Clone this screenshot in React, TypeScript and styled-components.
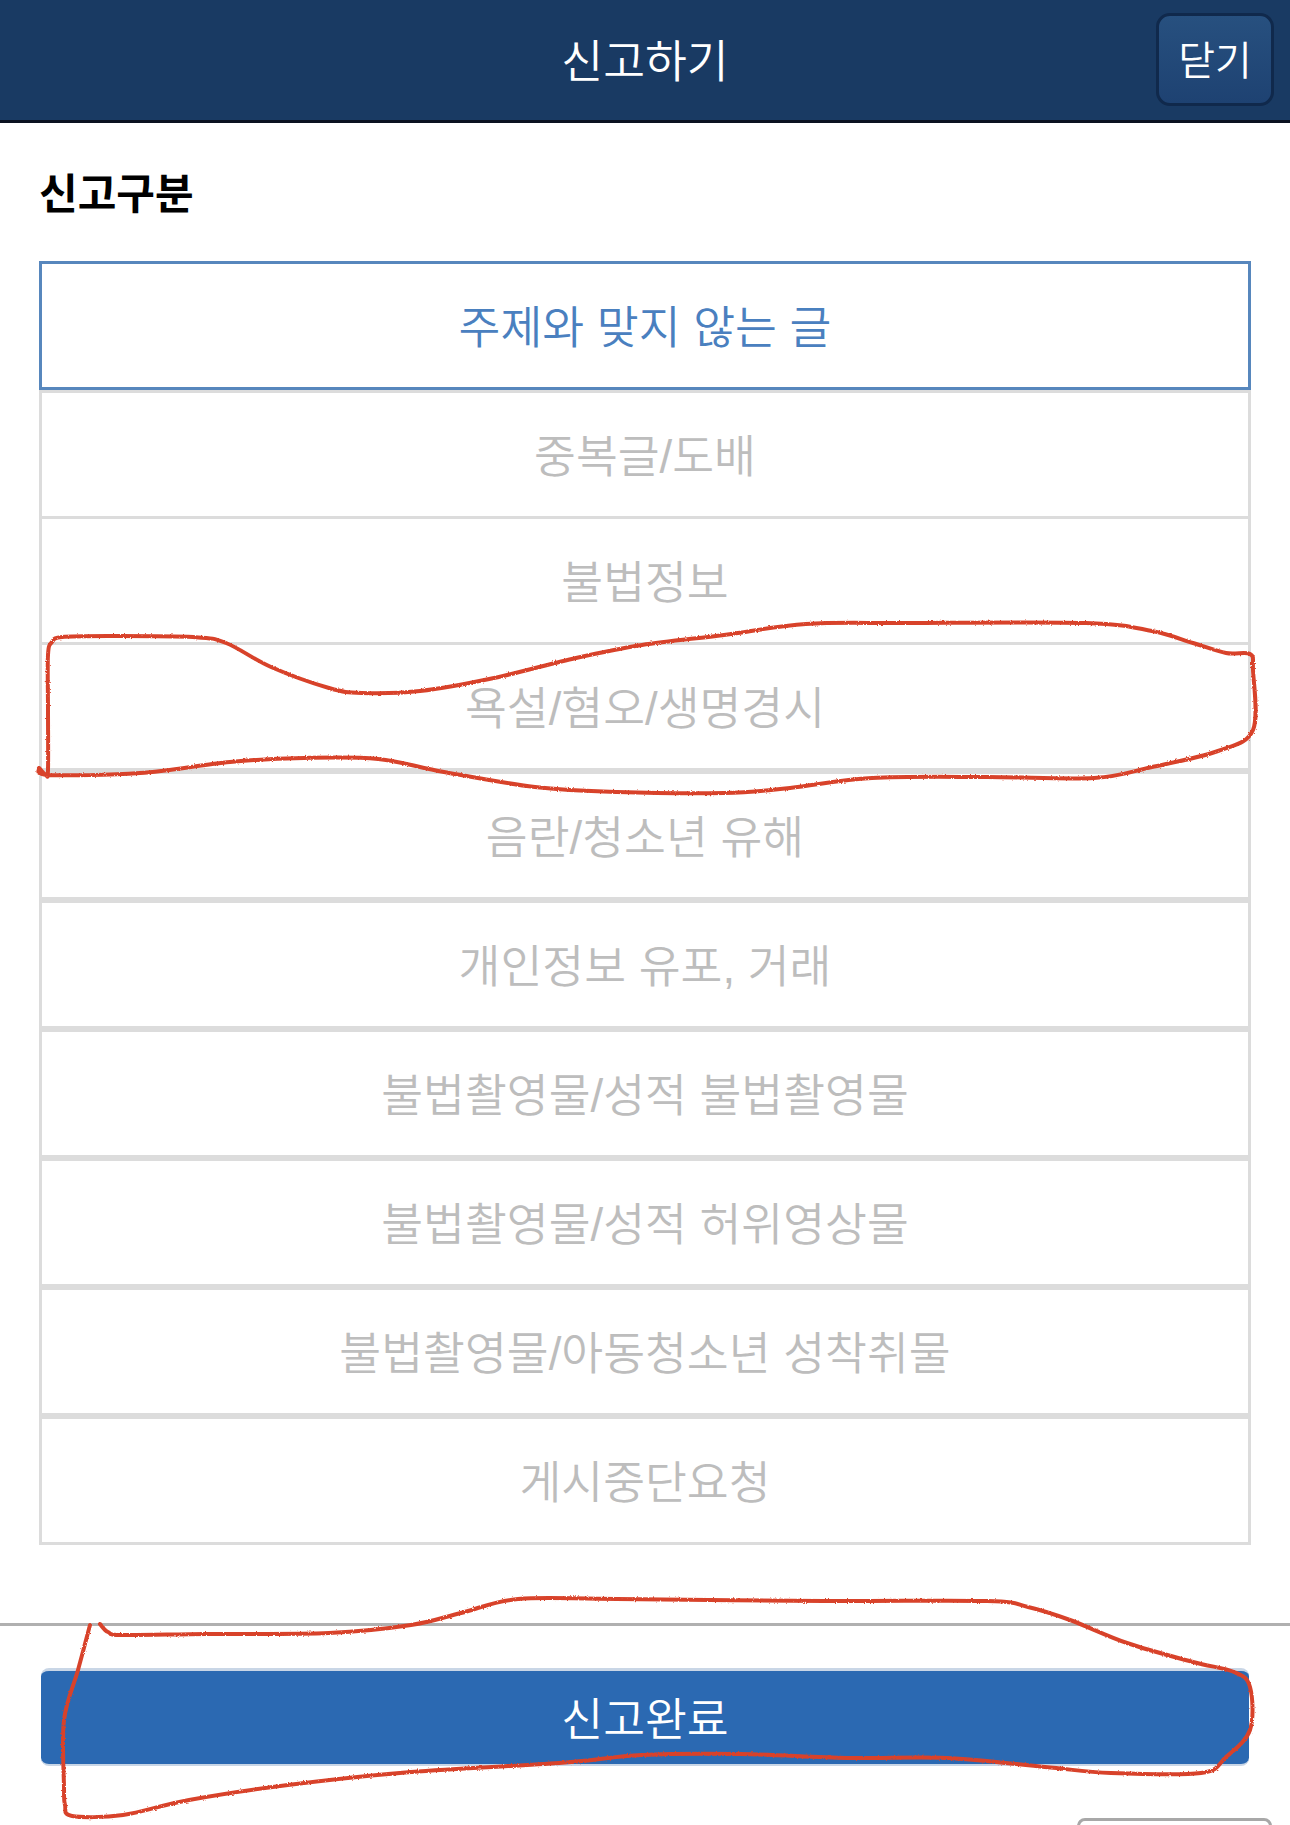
import { createGlobalStyle } from 'styled-components'
import styled from 'styled-components'

const Global = createGlobalStyle`
  html, body {
    margin: 0;
    padding: 0;
    background: #fff;
    font-family: "Liberation Sans", "Noto Sans CJK KR", sans-serif;
  }
`

const Page = styled.div`
  position: relative;
  width: 1290px;
  height: 1825px;
  overflow: hidden;
  background: #fff;
`

const Header = styled.header`
  position: relative;
  display: flex;
  align-items: center;
  justify-content: center;
  box-sizing: border-box;
  height: 123px;
  padding-bottom: 4px;
  background: #193a63;
  border-bottom: 3px solid #0a1220;
`

const Title = styled.h1`
  margin: 0;
  font-size: 45.5px;
  font-weight: 350;
  color: #fff;
`

const CloseButton = styled.button`
  position: absolute;
  top: 13px;
  right: 16px;
  width: 118px;
  height: 93px;
  padding: 0 0 4px;
  border: 3px solid #10294c;
  border-radius: 14px;
  background: linear-gradient(#27507f, #1e4272);
  color: #fff;
  font: inherit;
  font-size: 40px;
  font-weight: 350;
`

const Section = styled.section`
  padding: 0 39px;
`

const SectionTitle = styled.h2`
  margin: 0;
  padding: 44px 0 38px;
  font-size: 42px;
  line-height: 56px;
  font-weight: 700;
  color: #000;
`

const OptionList = styled.div`
  display: flex;
  flex-direction: column;
`

const Option = styled.div<{ $active?: boolean; $merged?: boolean }>`
  display: flex;
  align-items: center;
  justify-content: center;
  box-sizing: border-box;
  height: 129px;
  margin-top: ${p => (p.$merged ? '-3px' : '0')};
  padding-bottom: 3px;
  font-size: 45.5px;
  font-weight: 350;
  color: ${p => (p.$active ? '#4a80bf' : '#bdbdbd')};
  border: 3px solid ${p => (p.$active ? '#5787bd' : '#dcdcdc')};
`

const Footer = styled.footer`
  margin-top: 78px;
  padding: 0 41px;
  border-top: 3px solid #b0b0b0;
`

const SubmitButton = styled.button`
  display: block;
  box-sizing: border-box;
  width: 100%;
  height: 98px;
  margin-top: 42px;
  padding: 0 0 3px;
  border: 0;
  border-top: 3px solid #c9d6e6;
  border-bottom: 2px solid #c9d6e6;
  border-radius: 8px;
  background: #2b69b2;
  color: #fff;
  font: inherit;
  font-size: 45.5px;
  font-weight: 350;
`

const PeekButton = styled.div`
  position: absolute;
  top: 1818px;
  left: 1077px;
  width: 195px;
  height: 20px;
  box-sizing: border-box;
  border: 3px solid #a8a8a8;
  border-radius: 8px 8px 0 0;
`

const Scribble = styled.svg`
  position: absolute;
  top: 0;
  left: 0;
  pointer-events: none;
`

const options = [
  { label: '주제와 맞지 않는 글', active: true },
  { label: '중복글/도배' },
  { label: '불법정보', merged: true },
  { label: '욕설/혐오/생명경시', merged: true },
  { label: '음란/청소년 유해' },
  { label: '개인정보 유포, 거래' },
  { label: '불법촬영물/성적 불법촬영물' },
  { label: '불법촬영물/성적 허위영상물' },
  { label: '불법촬영물/아동청소년 성착취물' },
  { label: '게시중단요청' },
]

// pen marks on the screenshot, page coordinates
const markA: [number, number][] = [
  [39, 768], [46, 775], [48, 770], [48, 710], [48, 655], [52, 642], [62, 637], [107, 636], [193, 637], [226, 643],
  [271, 667], [329, 688], [362, 693], [420, 691], [494, 678], [576, 658], [642, 645], [724, 635],
  [806, 624], [905, 623], [1086, 623], [1152, 631], [1193, 643], [1226, 653], [1250, 654],
  [1253, 670], [1253, 730], [1218, 751], [1152, 767], [1094, 778], [987, 777], [872, 778], [790, 788],
  [724, 793], [617, 792], [535, 787], [444, 772], [378, 759], [304, 758], [230, 762], [140, 773],
  [49, 775], [39, 768],
]

const markB: [number, number][] = [
  [100, 1624], [108, 1632], [123, 1635], [206, 1634], [329, 1633], [411, 1625], [461, 1613], [518, 1599],
  [617, 1599], [823, 1601], [987, 1601], [1028, 1607], [1070, 1620], [1127, 1643], [1193, 1662],
  [1234, 1672], [1250, 1687], [1250, 1730], [1226, 1757], [1201, 1773], [1111, 1773], [1045, 1767],
  [946, 1758], [847, 1758], [740, 1754], [642, 1755], [559, 1763], [411, 1772], [288, 1785],
  [189, 1800], [123, 1815], [72, 1816], [65, 1805], [64, 1787], [64, 1720], [78, 1670], [90, 1625],
]

const smooth = (pts: [number, number][]) => {
  let d = `M${pts[0][0]} ${pts[0][1]}`
  for (let i = 0; i < pts.length - 1; i++) {
    const p0 = pts[i - 1] || pts[i]
    const p1 = pts[i]
    const p2 = pts[i + 1]
    const p3 = pts[i + 2] || p2
    const c1x = p1[0] + (p2[0] - p0[0]) / 6
    const c1y = p1[1] + (p2[1] - p0[1]) / 6
    const c2x = p2[0] - (p3[0] - p1[0]) / 6
    const c2y = p2[1] - (p3[1] - p1[1]) / 6
    d += ` C${c1x} ${c1y} ${c2x} ${c2y} ${p2[0]} ${p2[1]}`
  }
  return d
}

export default function App() {
  return (
    <Page>
      <Global />
      <Header>
        <Title>신고하기</Title>
        <CloseButton>닫기</CloseButton>
      </Header>
      <Section>
        <SectionTitle>신고구분</SectionTitle>
        <OptionList>
          {options.map(o => (
            <Option key={o.label} $active={o.active} $merged={o.merged}>{o.label}</Option>
          ))}
        </OptionList>
      </Section>
      <Footer>
        <SubmitButton>신고완료</SubmitButton>
      </Footer>
      <PeekButton />
      <Scribble width="1290" height="1825" viewBox="0 0 1290 1825" fill="none">
        <defs>
          <filter id="pen" x="-2%" y="-2%" width="104%" height="104%">
            <feTurbulence type="fractalNoise" baseFrequency="0.6" numOctaves="2" seed="3" />
            <feDisplacementMap in="SourceGraphic" scale="2.5" />
          </filter>
        </defs>
        <g stroke="#d8432b" strokeWidth="4" strokeLinejoin="round" strokeLinecap="round" filter="url(#pen)">
          <path d={smooth(markA)} />
          <path d={smooth(markB)} />
        </g>
      </Scribble>
    </Page>
  )
}
